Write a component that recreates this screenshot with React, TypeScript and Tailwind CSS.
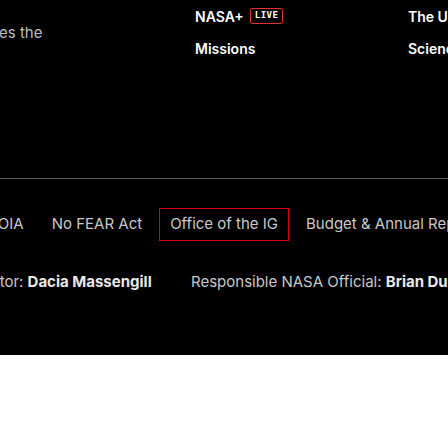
import React from "react";

export default function App() {
  const nav = ["FOIA", "No FEAR Act", "Office of the IG", "Budget & Annual Reports"];
  return (
    <div className="w-[448px] h-[448px] overflow-hidden bg-white" style={{ fontFamily: "Inter, 'Noto Sans', sans-serif" }}>
      <div className="h-[355px] bg-black overflow-hidden">
        <div className="flex h-[178px]">
          <div className="w-[195px] shrink-0 pt-[23px]">
            <div className="text-[15px] leading-5 text-[#bdbdbd] whitespace-nowrap -ml-[1px]">es the</div>
          </div>
          <div className="w-[213px] shrink-0 flex flex-col pt-[6px] gap-[12px]">
            <div className="flex items-center gap-[6px] h-[20px]">
              <span className="text-[14px] font-semibold text-white">NASA+</span>
              <span className="border border-[#e0312b] rounded-[2px] px-[4px] h-[16px] flex items-center text-[9px] font-bold text-white tracking-[0.5px]" style={{ fontFamily: "'DejaVu Sans Mono', monospace" }}>LIVE</span>
            </div>
            <div className="h-[20px] flex items-center text-[14px] font-semibold text-white">Missions</div>
          </div>
          <div className="shrink-0 flex flex-col pt-[6px] gap-[12px] whitespace-nowrap">
            <div className="h-[20px] flex items-center text-[14px] font-semibold text-white">The Universe</div>
            <div className="h-[20px] flex items-center text-[14px] font-semibold text-white">Science</div>
          </div>
        </div>
        <div className="border-t border-[#5a5a5a]" />
        <div className="flex gap-[6px] mt-[29px] -ml-[22px] whitespace-nowrap">
          {nav.map((n) => (
            <div
              key={n}
              className={
                "h-[33px] px-[10px] flex items-center text-[15px] text-[#c8c8c8] border " +
                (n === "Office of the IG" ? "border-[#e00000]" : "border-transparent")
              }
            >
              {n}
            </div>
          ))}
        </div>
        <div className="flex mt-[30px] text-[15px] whitespace-nowrap -ml-[4px]">
          <div className="w-[195px] shrink-0">
            <span className="text-[#c8c8c8]">itor: </span>
            <span className="font-bold text-[#e8e8e8]">Dacia Massengill</span>
          </div>
          <div>
            <span className="text-[#c8c8c8]">Responsible NASA Official: </span>
            <span className="font-bold text-[#e8e8e8]">Brian Dunbar</span>
          </div>
        </div>
      </div>
    </div>
  );
}
